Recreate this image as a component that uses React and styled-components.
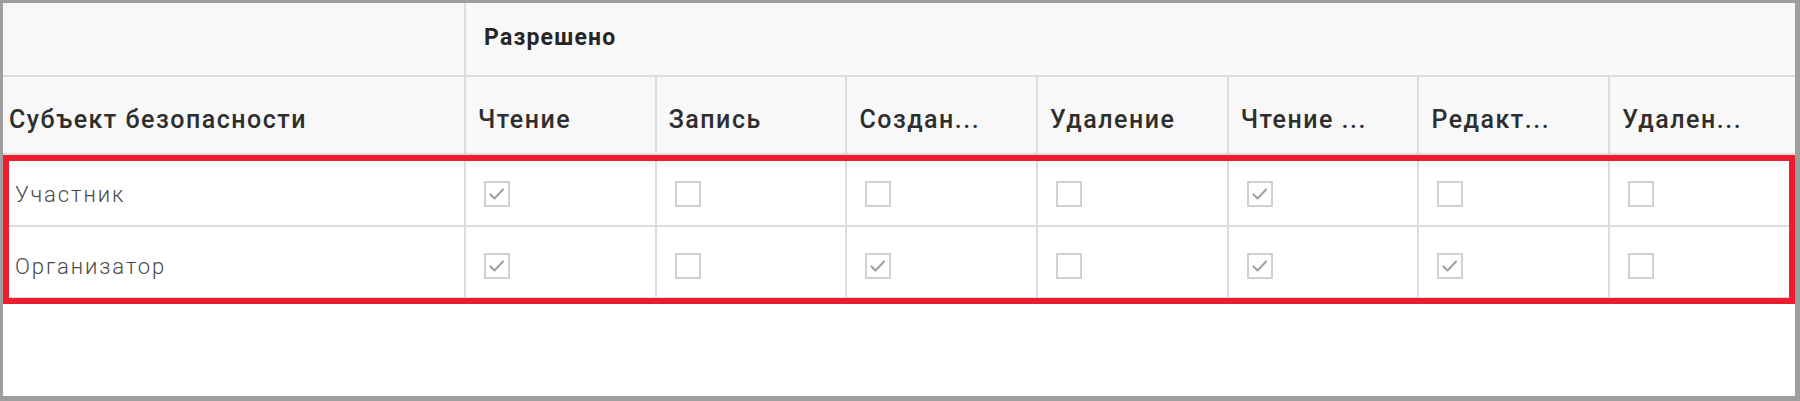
import React from "react";
import styled, { createGlobalStyle } from "styled-components";

const columns = ["Чтение", "Запись", "Создан...", "Удаление", "Чтение ...", "Редакт...", "Удален..."];

const subjects = [
  { name: "Участник", perms: [1, 0, 0, 0, 1, 0, 0] },
  { name: "Организатор", perms: [1, 0, 1, 0, 1, 1, 0] },
];

const App = () => {
  return (
    <>
      <GlobalStyle />
      <Frame>
        <Grid>
          <GroupCell $first />
          <GroupCell $span>Разрешено</GroupCell>

          <HeadCell $first>Субъект безопасности</HeadCell>
          {columns.map((c) => (
            <HeadCell key={c}>{c}</HeadCell>
          ))}

          {subjects.map((s) => (
            <React.Fragment key={s.name}>
              <BodyCell $first>{s.name}</BodyCell>
              {s.perms.map((p, i) => (
                <BodyCell key={i}>
                  <Checkbox checked={!!p} />
                </BodyCell>
              ))}
            </React.Fragment>
          ))}
        </Grid>
        <Highlight />
      </Frame>
    </>
  );
};

const Checkbox = ({ checked }) => (
  <Box>
    {checked && (
      <svg width="22" height="22" viewBox="0 0 22 22">
        <path
          d="M4.5 11.5 L8.5 15.5 L17 6.5"
          fill="none"
          stroke="#a3a3a3"
          strokeWidth="2.2"
          strokeLinecap="round"
          strokeLinejoin="round"
        />
      </svg>
    )}
  </Box>
);

const GlobalStyle = createGlobalStyle`
  html, body {
    margin: 0;
    padding: 0;
    background: #ffffff;
  }
  body {
    font-family: Roboto, "Liberation Sans", sans-serif;
  }
`;

const Frame = styled.div`
  position: relative;
  width: 1800px;
  height: 401px;
  box-sizing: border-box;
  border-style: solid;
  border-color: #9e9e9e;
  border-width: 3px 5px 5px 3px;
  background: #ffffff;
  overflow: hidden;
`;

const Grid = styled.div`
  display: grid;
  grid-template-columns: 461px repeat(6, 190.7px) 1fr;
  grid-template-rows: 74px 78px 72px 72px;
`;

const Cell = styled.div`
  box-sizing: border-box;
  display: flex;
  align-items: center;
  border-bottom: 2px solid #dcdcdc;
  border-left: ${(p) => (p.$first ? "none" : "2px solid #dcdcdc")};
  white-space: nowrap;
  overflow: hidden;
`;

const GroupCell = styled(Cell)`
  grid-column: ${(p) => (p.$span ? "2 / -1" : "auto")};
  background: #f8f8f8;
  padding-left: 18px;
  padding-bottom: 4px;
  font-size: 23px;
  font-weight: 700;
  letter-spacing: 1.2px;
  color: #262626;
`;

const HeadCell = styled(Cell)`
  background: #f8f8f8;
  padding-left: ${(p) => (p.$first ? "6px" : "12px")};
  padding-top: 8px;
  font-size: 25px;
  font-weight: 500;
  letter-spacing: 1.5px;
  color: #2e2e2e;
`;

const BodyCell = styled(Cell)`
  background: #ffffff;
  padding-left: ${(p) => (p.$first ? "12px" : "18px")};
  padding-top: 8px;
  font-size: 22px;
  font-weight: 300;
  letter-spacing: 1.9px;
  color: #4a4a4a;
`;

const Box = styled.span`
  box-sizing: border-box;
  width: 26px;
  height: 26px;
  border: 2px solid #d0d0d0;
  background: #ffffff;
  display: flex;
  align-items: center;
  justify-content: center;
`;

const Highlight = styled.div`
  position: absolute;
  top: 152px;
  left: 0;
  right: 0;
  height: 149px;
  box-sizing: border-box;
  border: 6px solid #ed1c2e;
  pointer-events: none;
`;

export default App;
